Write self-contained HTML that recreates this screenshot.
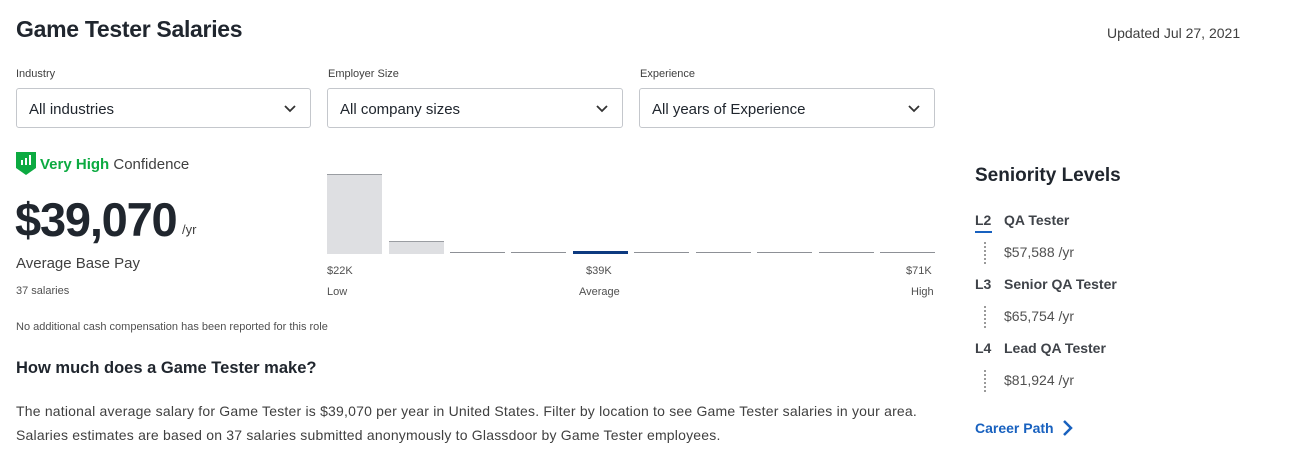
<!DOCTYPE html>
<html><head><meta charset="utf-8"><style>
*{box-sizing:border-box;margin:0;padding:0}
body{width:1289px;height:473px;background:#fff;font-family:"Liberation Sans",sans-serif;color:#20262e;position:relative;overflow:hidden}
.a{position:absolute;white-space:nowrap}
.dd{position:absolute;top:88px;height:40px;border:1px solid #c4c7cc;border-radius:3px;font-size:15px;line-height:42px;padding-left:12px;color:#20262e}
.dd svg{position:absolute;right:14px;top:16px}
.lbl{position:absolute;top:68px;font-size:11px;color:#404040}
.bar{position:absolute;width:55px;background:#dedfe2;border-top:1px solid #9a9da2}
.ln{position:absolute;width:55px;height:1px;background:#8d9096;top:252px}
.sm{font-size:11px;color:#505050}
.lv{font-size:14px;font-weight:bold;color:#3f4349}
.pay{font-size:14px;color:#505050}
.dot{position:absolute;left:984px;width:0;height:22px;border-left:2px dotted #9a9a9a}
</style></head><body>
<div class="a" style="left:16px;top:16px;font-size:23px;font-weight:bold;letter-spacing:-0.3px">Game Tester Salaries</div>
<div class="a" style="left:1107px;top:25px;font-size:14px;color:#404040">Updated Jul 27, 2021</div>

<div class="lbl" style="left:16px">Industry</div>
<div class="lbl" style="left:328px">Employer Size</div>
<div class="lbl" style="left:640px">Experience</div>
<div class="dd" style="left:16px;width:295px">All industries<svg width="12" height="8" viewBox="0 0 12 8"><path d="M1 1l5 5 5-5" fill="none" stroke="#333" stroke-width="1.8"/></svg></div>
<div class="dd" style="left:327px;width:296px">All company sizes<svg width="12" height="8" viewBox="0 0 12 8"><path d="M1 1l5 5 5-5" fill="none" stroke="#333" stroke-width="1.8"/></svg></div>
<div class="dd" style="left:639px;width:296px">All years of Experience<svg width="12" height="8" viewBox="0 0 12 8"><path d="M1 1l5 5 5-5" fill="none" stroke="#333" stroke-width="1.8"/></svg></div>

<svg class="a" style="left:16px;top:152px" width="20" height="24" viewBox="0 0 20 24"><path d="M0 0h20v16l-10 7-10-7z" fill="#0caa41"/><rect x="5" y="8" width="2" height="5" fill="#fff"/><rect x="9" y="6" width="2" height="7" fill="#fff"/><rect x="13" y="3" width="2" height="10" fill="#fff"/></svg>
<div class="a" style="left:40px;top:156px;font-size:15px"><span style="color:#0caa41;font-weight:bold">Very High</span> <span style="color:#404040">Confidence</span></div>
<div class="a" style="left:15px;top:192px;font-size:47px;font-weight:bold;letter-spacing:-1.2px;color:#20262e">$39,070</div>
<div class="a" style="left:182px;top:222px;font-size:13px;color:#404040">/yr</div>
<div class="a" style="left:16px;top:255px;font-size:15px;color:#404040">Average Base Pay</div>
<div class="a sm" style="left:16px;top:285px">37 salaries</div>
<div class="a sm" style="left:16px;top:321px">No additional cash compensation has been reported for this role</div>

<div class="bar" style="left:327px;top:174px;height:80px"></div>
<div class="bar" style="left:389px;top:241px;height:13px"></div>
<div class="ln" style="left:450px"></div>
<div class="ln" style="left:511px"></div>
<div class="ln" style="left:573px;height:3px;top:251px;background:#0d3a80"></div>
<div class="ln" style="left:634px"></div>
<div class="ln" style="left:696px"></div>
<div class="ln" style="left:757px"></div>
<div class="ln" style="left:819px"></div>
<div class="ln" style="left:880px"></div>
<div class="a sm" style="left:327px;top:265px">$22K</div>
<div class="a sm" style="left:327px;top:286px">Low</div>
<div class="a sm" style="left:586px;top:265px">$39K</div>
<div class="a sm" style="left:579px;top:286px">Average</div>
<div class="a sm" style="left:906px;top:265px">$71K</div>
<div class="a sm" style="left:911px;top:286px">High</div>

<div class="a" style="left:16px;top:359px;font-size:16.5px;font-weight:bold;color:#20262e">How much does a Game Tester make?</div>
<div class="a" style="left:16px;top:399px;font-size:14px;color:#404040;line-height:24px;letter-spacing:0.2px">The national average salary for Game Tester is $39,070 per year in United States. Filter by location to see Game Tester salaries in your area.<br>Salaries estimates are based on 37 salaries submitted anonymously to Glassdoor by Game Tester employees.</div>

<div class="a" style="left:975px;top:165px;font-size:19px;font-weight:bold;color:#20262e">Seniority Levels</div>
<div class="a lv" style="left:975px;top:212px">L2</div>
<div style="position:absolute;left:975px;top:231px;width:17px;height:2px;background:#1861bf"></div>
<div class="a lv" style="left:1004px;top:212px">QA Tester</div>
<div class="dot" style="top:242px"></div>
<div class="a pay" style="left:1004px;top:244px">$57,588 /yr</div>
<div class="a lv" style="left:975px;top:276px">L3</div>
<div class="a lv" style="left:1004px;top:276px">Senior QA Tester</div>
<div class="dot" style="top:306px"></div>
<div class="a pay" style="left:1004px;top:308px">$65,754 /yr</div>
<div class="a lv" style="left:975px;top:340px">L4</div>
<div class="a lv" style="left:1004px;top:340px">Lead QA Tester</div>
<div class="dot" style="top:370px"></div>
<div class="a pay" style="left:1004px;top:372px">$81,924 /yr</div>
<div class="a" style="left:975px;top:420px;font-size:14px;font-weight:bold;color:#1861bf">Career Path</div>
<svg class="a" style="left:1062px;top:419px" width="12" height="18" viewBox="0 0 12 18"><path d="M2 2l7 7-7 7" fill="none" stroke="#1861bf" stroke-width="2.5"/></svg>
</body></html>
